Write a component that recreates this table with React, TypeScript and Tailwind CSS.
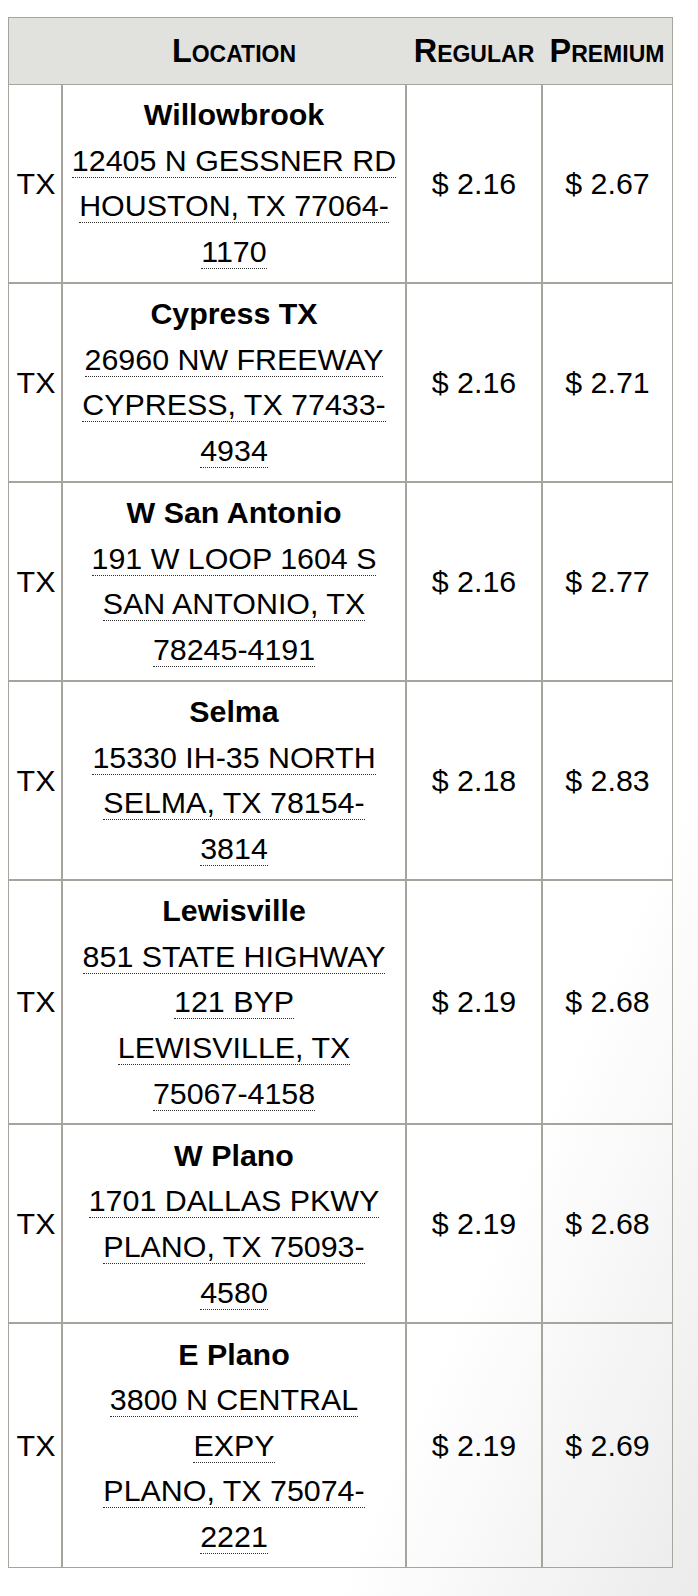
import React from "react";

type Row = { name: string; lines: string[]; reg: string; prem: string };

const rows: Row[] = [
  { name: "Willowbrook", lines: ["12405 N GESSNER RD", "HOUSTON, TX 77064-", "1170"], reg: "2.16", prem: "2.67" },
  { name: "Cypress TX", lines: ["26960 NW FREEWAY", "CYPRESS, TX 77433-", "4934"], reg: "2.16", prem: "2.71" },
  { name: "W San Antonio", lines: ["191 W LOOP 1604 S", "SAN ANTONIO, TX", "78245-4191"], reg: "2.16", prem: "2.77" },
  { name: "Selma", lines: ["15330 IH-35 NORTH", "SELMA, TX 78154-", "3814"], reg: "2.18", prem: "2.83" },
  { name: "Lewisville", lines: ["851 STATE HIGHWAY", "121 BYP", "LEWISVILLE, TX", "75067-4158"], reg: "2.19", prem: "2.68" },
  { name: "W Plano", lines: ["1701 DALLAS PKWY", "PLANO, TX 75093-", "4580"], reg: "2.19", prem: "2.68" },
  { name: "E Plano", lines: ["3800 N CENTRAL", "EXPY", "PLANO, TX 75074-", "2221"], reg: "2.19", prem: "2.69" },
];

export default function App() {
  return (
    <div className="min-h-[1596px] w-full bg-[linear-gradient(to_bottom_right,#ffffff_74%,#ebebeb_100%)] pt-[17px] pl-[8px] font-['Liberation_Sans',Arial,sans-serif] text-black">
      <table className="border-separate border-spacing-0 table-fixed w-[665px]">
        <colgroup>
          <col className="w-[54px]" />
          <col className="w-[344px]" />
          <col className="w-[136px]" />
          <col className="w-[131px]" />
        </colgroup>
        <thead>
          <tr className="bg-[#e1e1dd] text-[32.4px] font-bold [font-variant:small-caps] leading-[48px]">
            <th className="h-[67px] p-0 border-t border-l border-[#a6a49c]"></th>
            <th className="h-[67px] p-0 text-center border-t border-[#a6a49c]">Location</th>
            <th className="h-[67px] p-0 text-center border-t border-[#a6a49c]">Regular</th>
            <th className="h-[67px] p-0 text-center border-t border-r border-[#a6a49c]">Premium</th>
          </tr>
        </thead>
        <tbody className="text-[30.4px] leading-[45.6px]">
          {rows.map((r) => (
            <tr key={r.name}>
              <td className="border border-[#a6a49c] px-[7.6px] py-[7.3px] text-center align-middle">TX</td>
              <td className="border border-[#a6a49c] px-[7.6px] py-[7.3px] text-center align-middle whitespace-nowrap">
                <div className="font-bold">{r.name}</div>
                {r.lines.map((l, i) => (
                  <React.Fragment key={i}>
                    <span className="border-b border-dotted border-[#333333]">{l}</span>
                    {i < r.lines.length - 1 && <br />}
                  </React.Fragment>
                ))}
              </td>
              <td className="border border-[#a6a49c] px-[7.6px] py-[7.3px] text-center align-middle">$ {r.reg}</td>
              <td className="border border-[#a6a49c] px-[7.6px] py-[7.3px] text-center align-middle">$ {r.prem}</td>
            </tr>
          ))}
        </tbody>
      </table>
    </div>
  );
}
